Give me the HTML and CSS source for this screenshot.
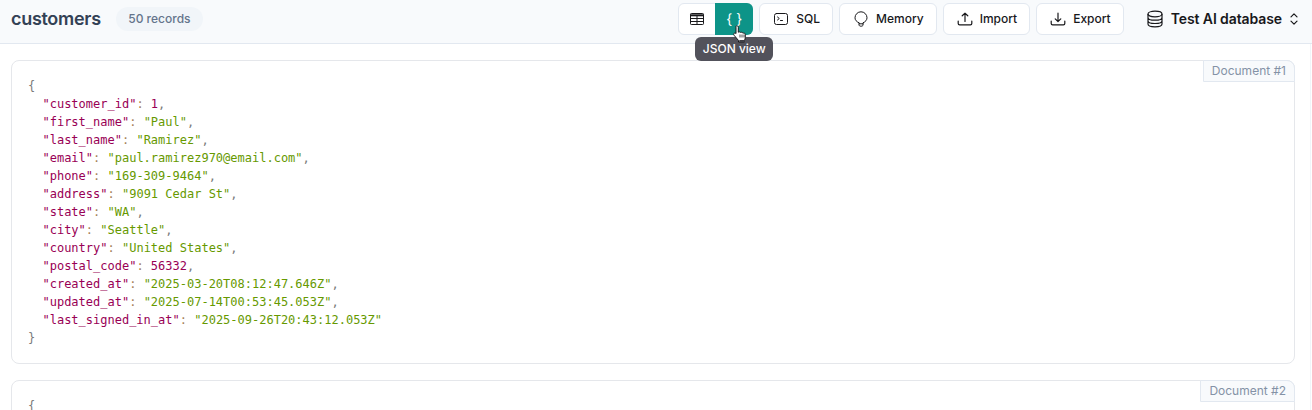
FILE: index.html
```html
<!DOCTYPE html>
<html lang="en">
<head>
<meta charset="utf-8">
<title>customers</title>
<link rel="stylesheet" href="styles.css">
</head>
<body>
<header class="topbar">
  <div class="title-group">
    <h1 class="title">customers</h1>
    <span class="count">50 records</span>
  </div>
  <div class="actions">
    <div class="toggle">
      <button class="toggle-btn">
        <svg class="ico" viewBox="0 0 16 16" width="16" height="16" fill="none" stroke="#18181b" stroke-width="1"><rect x="1.5" y="2.5" width="13" height="11" rx=".8"/><path d="M1.5 4.300h13" stroke-width="2"/><path d="M1.500 7.500h13M1.500 10.500h13M8 5v8.500"/></svg>
      </button>
      <button class="toggle-btn active">
        <span class="braces">{ }</span>
        <span class="tooltip">JSON view</span>
        <svg class="cursor" viewBox="0 0 16 18" width="16" height="18"><path d="M4.800.800c.9 0 1.500.6 1.500 1.500v4.900l.9-.3c.6-.1 1.100.1 1.400.5.500-.3 1.200-.2 1.600.3.500-.2 1.200 0 1.500.5.700-.2 1.500.3 1.600 1.100v3c0 1.400-.4 2.300-.9 3.200v1.500H6.500v-1.500L2 10.200c-.5-.7-.4-1.500.2-1.900.6-.4 1.300-.2 1.800.3V2.300c0-.9-.1-1.500.8-1.500z" fill="#fff" stroke="#18181b" stroke-width="1" stroke-linejoin="round"/><path d="M7.300 15h5.500v2.200H7.300z" fill="#3f3f46"/><path d="M8 9.500v3M10 9.500v3M12 9.500v3" stroke="#18181b" stroke-width=".8"/></svg>
      </button>
    </div>
    <button class="btn">
      <svg class="ico" viewBox="0 0 16 16" width="16" height="16" fill="none" stroke="#18181b" stroke-width="1" stroke-linecap="round" stroke-linejoin="round"><rect x="1.500" y="2.500" width="13" height="11" rx="2"/><path d="M4.500 6l1.800 1.500-1.800 1.500M7.500 9.500h2"/></svg>
      <span>SQL</span>
    </button>
    <button class="btn">
      <svg class="ico" viewBox="0 0 16 16" width="16" height="16" fill="none" stroke="#18181b" stroke-width="1" stroke-linecap="round" stroke-linejoin="round"><path d="M6 11.800C3.500 10.800 2 8.900 2 6.800a6 6 0 0 1 12 0c0 2.100-1.500 4-4 5v2.200c0 .8-.8 1.200-2 1.200s-2-.4-2-1.200z"/><path d="M6 12.800h4"/></svg>
      <span>Memory</span>
    </button>
    <button class="btn">
      <svg class="ico" viewBox="0 0 16 16" width="16" height="16" fill="none" stroke="#18181b" stroke-width="1.200" stroke-linecap="round" stroke-linejoin="round"><path d="M8 10.500V2.200M5.200 4.800L8 2.200l2.800 2.600M1.200 10v2.500c0 .8.600 1.400 1.400 1.400h10.800c.8 0 1.400-.6 1.400-1.400V10"/></svg>
      <span>Import</span>
    </button>
    <button class="btn">
      <svg class="ico" viewBox="0 0 16 16" width="16" height="16" fill="none" stroke="#18181b" stroke-width="1.200" stroke-linecap="round" stroke-linejoin="round"><path d="M8 2.200v8.300M5.200 7.900L8 10.500l2.800-2.600M1.200 10v2.500c0 .8.600 1.400 1.400 1.400h10.800c.8 0 1.400-.6 1.400-1.400V10"/></svg>
      <span>Export</span>
    </button>
    <div class="db">
      <svg class="db-ico" viewBox="0 0 18 18" width="18" height="18" fill="none" stroke="#18181b" stroke-width="1.200"><ellipse cx="9" cy="4" rx="7" ry="2.800"/><path d="M2 4v10c0 1.600 3 2.800 7 2.800s7-1.200 7-2.800V4M2 7.400c0 1.600 3 2.800 7 2.800s7-1.200 7-2.800M2 10.700c0 1.600 3 2.800 7 2.800s7-1.200 7-2.800"/></svg>
      <span class="db-name">Test AI database</span>
      <svg class="chev" viewBox="0 0 10 14" width="10" height="14" fill="none" stroke="#18181b" stroke-width="1.200" stroke-linecap="round" stroke-linejoin="round"><path d="M2 4.800L5 1.800l3 3M2 9.200l3 3 3-3"/></svg>
    </div>
  </div>
</header>
<main class="docs">
  <article class="doc">
    <span class="doc-tag">Document #1</span>
<pre class="json"><span class="p">{</span>
  <span class="k">"customer_id"</span><span class="c">:</span> <span class="n">1</span><span class="p">,</span>
  <span class="k">"first_name"</span><span class="c">:</span> <span class="s">"Paul"</span><span class="p">,</span>
  <span class="k">"last_name"</span><span class="c">:</span> <span class="s">"Ramirez"</span><span class="p">,</span>
  <span class="k">"email"</span><span class="c">:</span> <span class="s">"paul.ramirez970@email.com"</span><span class="p">,</span>
  <span class="k">"phone"</span><span class="c">:</span> <span class="s">"169-309-9464"</span><span class="p">,</span>
  <span class="k">"address"</span><span class="c">:</span> <span class="s">"9091 Cedar St"</span><span class="p">,</span>
  <span class="k">"state"</span><span class="c">:</span> <span class="s">"WA"</span><span class="p">,</span>
  <span class="k">"city"</span><span class="c">:</span> <span class="s">"Seattle"</span><span class="p">,</span>
  <span class="k">"country"</span><span class="c">:</span> <span class="s">"United States"</span><span class="p">,</span>
  <span class="k">"postal_code"</span><span class="c">:</span> <span class="n">56332</span><span class="p">,</span>
  <span class="k">"created_at"</span><span class="c">:</span> <span class="s">"2025-03-20T08:12:47.646Z"</span><span class="p">,</span>
  <span class="k">"updated_at"</span><span class="c">:</span> <span class="s">"2025-07-14T00:53:45.053Z"</span><span class="p">,</span>
  <span class="k">"last_signed_in_at"</span><span class="c">:</span> <span class="s">"2025-09-26T20:43:12.053Z"</span>
<span class="p">}</span></pre>
  </article>
  <article class="doc">
    <span class="doc-tag">Document #2</span>
<pre class="json"><span class="p">{</span></pre>
  </article>
</main>
</body>
</html>
```
FILE: styles.css
```css
* { box-sizing: border-box; }
html, body { margin: 0; height: 100%; overflow: hidden; }
body { background: #fff; font-family: Inter, "Liberation Sans", sans-serif; color: #18181b; }
.topbar {
  position: relative;
  z-index: 2;
  height: 44px;
  padding: 0 13px 6px 11px;
  display: flex;
  align-items: center;
  justify-content: space-between;
  background: #f8fafc;
  border-bottom: 1px solid #e2e8f0;
}
.title-group { display: flex; align-items: center; gap: 15px; }
.title { margin: 0; font-size: 18px; font-weight: 600; color: #334155; line-height: 24px; letter-spacing: -0.3px; }
.count { height: 24px; padding: 0 12.5px; border-radius: 12px; background: #f1f5f9; color: #64748b; font-size: 12px; line-height: 24px; font-weight: 500; }
.actions { display: flex; align-items: center; gap: 6px; }
.toggle { display: flex; height: 32px; background: #fff; border: 1px solid #e2e8f0; border-radius: 6px; }
.toggle-btn { position: relative; width: 36px; margin: -1px 0; padding: 0; height: 32px; border: 0; background: transparent; display: flex; align-items: center; justify-content: center; font-family: inherit; }
.toggle-btn.active { width: 38px; margin-right: -1px; background: #0d9488; border-radius: 0 6px 6px 0; }
.braces { color: #fff; font-size: 14px; font-weight: 400; margin-top: -1px; }
.cursor { position: absolute; left: 17px; top: 22px; }
.tooltip { position: absolute; top: 34px; left: -20px; width: 78px; height: 24px; border-radius: 6px; background: #52525b; color: #fff; font-size: 12px; font-weight: 500; line-height: 24px; text-align: center; white-space: nowrap; }
.btn { height: 32px; padding: 0 12px 0 13px; display: flex; align-items: center; gap: 7px; background: #fff; border: 1px solid #e2e8f0; border-radius: 6px; font-family: inherit; font-size: 12px; font-weight: 500; color: #18181b; }
.db { display: flex; align-items: center; margin-left: 16px; font-size: 14px; font-weight: 600; color: #18181b; letter-spacing: -0.1px; }
.db-ico { margin-right: 7px; }
.chev { margin-left: 7px; }
.docs { height: calc(100vh - 44px); margin-right: 1px; padding: 16px 15px 0 11px; display: flex; flex-direction: column; gap: 16px; border-right: 1px solid #f1f5f9; overflow: hidden; }
.doc { position: relative; flex: none; border: 1px solid #e5e7eb; border-radius: 8px; background: #fff; padding: 16px; }
.doc-tag { position: absolute; top: -1px; right: -1px; height: 22px; padding: 0 8px; background: #f8fafc; border: 1px solid #e2e8f0; border-radius: 0 8px 0 0; color: #8492a6; font-size: 12px; line-height: 20px; }
.json { margin: 0; font-family: "DejaVu Sans Mono", "Liberation Mono", monospace; font-size: 12px; line-height: 18px; color: #7a7a7a; }
.k { color: #990055; }
.s { color: #669900; }
.n { color: #990055; }
.c { color: #a67f59; }
.p { color: #7a7a7a; }
```
